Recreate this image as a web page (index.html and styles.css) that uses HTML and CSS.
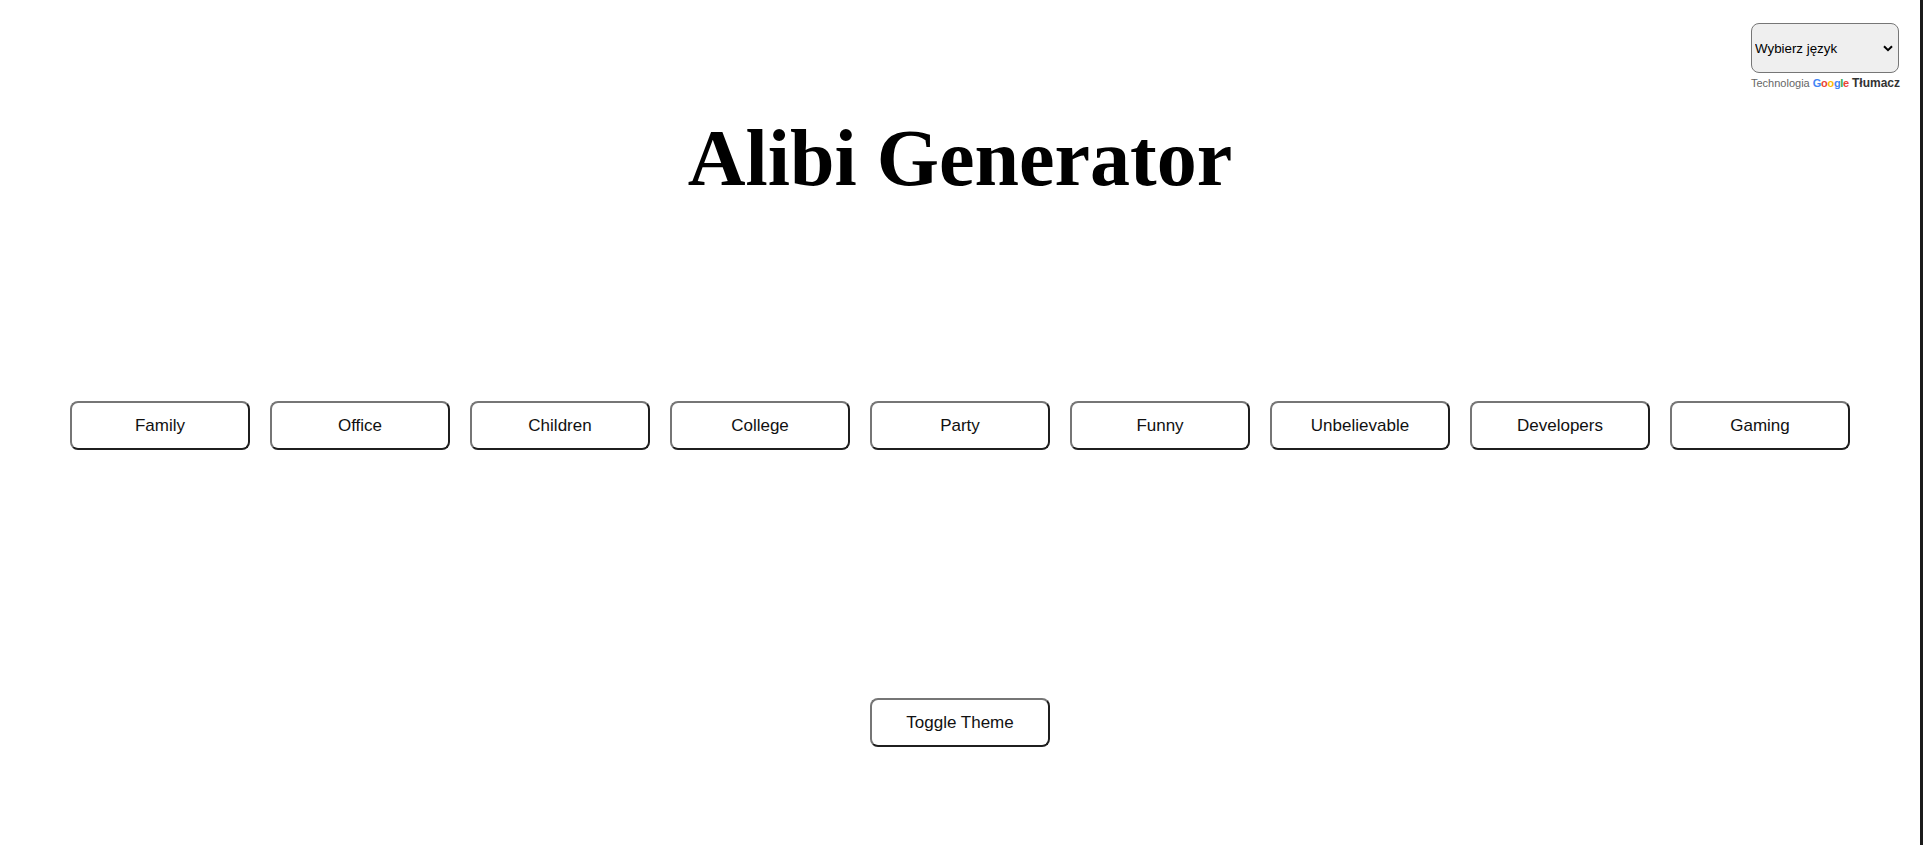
FILE: index.html
```html
<!DOCTYPE html>
<html lang="en">
<head>
<meta charset="utf-8">
<title>Alibi Generator</title>
<link rel="stylesheet" href="styles.css">
</head>
<body>
<div class="page">
  <div class="translate">
    <div class="select-wrap">
      <select class="lang"><option>Wybierz język</option></select>
      <svg class="chev" width="10" height="7" viewBox="0 0 10 7"><path d="M1 1.2 L5 5.2 L9 1.2" fill="none" stroke="#000" stroke-width="2"/></svg>
    </div>
    <div class="powered">Technologia <span class="glogo"><span class="gb">G</span><span class="gr">o</span><span class="gy">o</span><span class="gb">g</span><span class="gg">l</span><span class="gr">e</span></span> <span class="tl">Tłumacz</span></div>
  </div>
  <h1 class="title">Alibi Generator</h1>
  <div class="categories">
    <button class="btn">Family</button>
    <button class="btn">Office</button>
    <button class="btn">Children</button>
    <button class="btn">College</button>
    <button class="btn">Party</button>
    <button class="btn">Funny</button>
    <button class="btn">Unbelievable</button>
    <button class="btn">Developers</button>
    <button class="btn">Gaming</button>
  </div>
  <div class="theme-row">
    <button class="btn">Toggle Theme</button>
  </div>
</div>
</body>
</html>
```
FILE: styles.css
```css
html {
  background: #1b1b1b;
}
body {
  margin: 0;
  width: 1920px;
  min-height: 845px;
  background: #fff;
}
.page {
  position: relative;
  padding-top: 112px;
}
.title {
  font: bold 80px/92px "Liberation Serif", "Times New Roman", serif;
  text-align: center;
  margin: 0;
  color: #000;
}
.categories {
  display: flex;
  justify-content: center;
  gap: 20px;
  margin-top: 197px;
}
.btn {
  width: 180px;
  height: 49px;
  box-sizing: border-box;
  font: 17px/21px "Liberation Sans", Arial, sans-serif;
  background: #fff;
  color: #111;
  border: 2px solid;
  border-color: #767676 #1f1f1f #1f1f1f #767676;
  border-radius: 8px;
  padding: 0;
}
.theme-row {
  display: flex;
  justify-content: center;
  margin-top: 248px;
}
.translate {
  position: absolute;
  top: 23px;
  right: 21px;
  width: 148px;
}
.select-wrap {
  position: relative;
  height: 50px;
}
.lang {
  appearance: none;
  -webkit-appearance: none;
  width: 148px;
  height: 50px;
  box-sizing: border-box;
  background: #efefef;
  border: 1px solid #767676;
  border-radius: 8px;
  font: 13.333px "Liberation Sans", Arial, sans-serif;
  color: #000;
  padding: 0 0 0 3px;
  margin: 0;
}
.chev {
  position: absolute;
  right: 6px;
  top: 22px;
  pointer-events: none;
}
.powered {
  margin-top: 4px;
  font: 11px/13px "Liberation Sans", Arial, sans-serif;
  color: #666;
  white-space: nowrap;
}
.glogo {
  font-weight: bold;
  font-size: 11px;
  letter-spacing: -0.3px;
}
.gb { color: #4285f4; }
.gr { color: #ea4335; }
.gy { color: #fbbc05; }
.gg { color: #34a853; }
.tl {
  font-weight: bold;
  color: #333;
  font-size: 12px;
}
```
